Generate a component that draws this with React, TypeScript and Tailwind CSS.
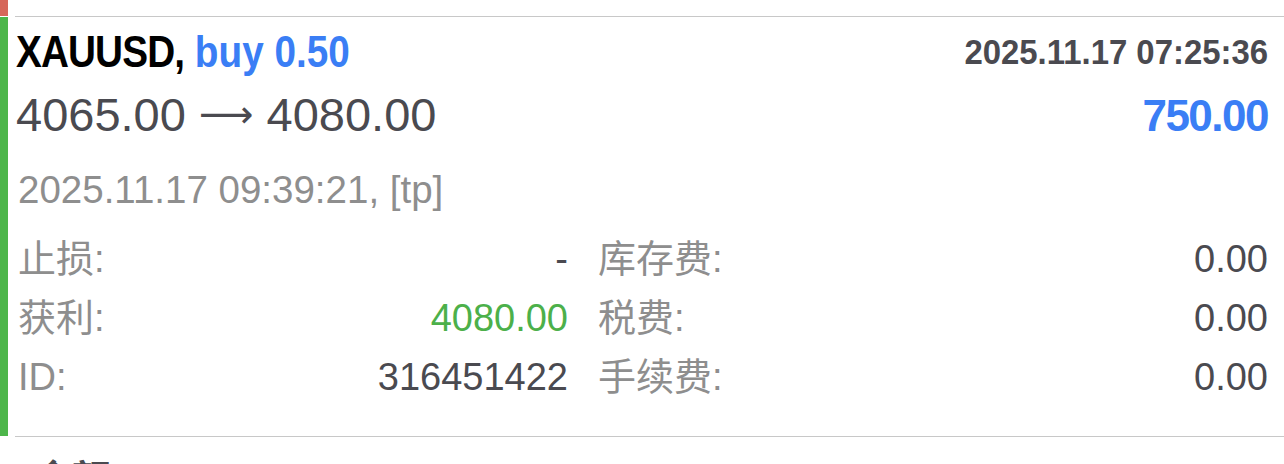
const details = [
  { label: '止损:', value: '-', tone: 'text-[#4a4a50]', rightLabel: '库存费:', rightValue: '0.00' },
  { label: '获利:', value: '4080.00', tone: 'text-[#4cb04a]', rightLabel: '税费:', rightValue: '0.00' },
  { label: 'ID:', value: '316451422', tone: 'text-[#4a4a50]', rightLabel: '手续费:', rightValue: '0.00' }
]

function Divider() {
  return (
    <div className="flex h-px">
      <div className="w-[15px] bg-white" />
      <div className="flex-1 bg-[#c8c8c8]" />
    </div>
  )
}

export default function App() {
  return (
    <div
      className="h-[464px] w-[1284px] overflow-hidden bg-white"
      style={{ fontFamily: '"Liberation Sans", "Noto Sans CJK SC", sans-serif' }}
    >
      {/* previous deal, only its bottom edge shows */}
      <div className="flex h-4">
        <div className="w-2 bg-[#d6675a]" />
      </div>
      <Divider />

      <div className="flex h-[419px]">
        <div className="w-2 bg-[#4db64a]" />
        <div className="flex-1 pl-2 pr-4">
          <div className="flex h-[70px] items-center justify-between leading-[70px]">
            <p className="inline-block origin-left scale-x-[0.88] whitespace-nowrap text-[44px] font-bold text-black">
              <span className="tracking-[-1px]">XAUUSD,</span> <span className="text-[#3a7ef5]">buy 0.50</span>
            </p>
            <p className="inline-block origin-right scale-x-[0.94] whitespace-nowrap text-[35px] font-bold text-[#4a4a50]">
              2025.11.17 07:25:36
            </p>
          </div>
          <div className="flex h-[58px] items-center justify-between leading-[58px]">
            <p className="whitespace-nowrap text-[47px] text-[#4a4a50]">
              4065.00{' '}
              <span className="relative -top-[4px] text-[38px]" style={{ fontFamily: '"DejaVu Sans", sans-serif' }}>
                ⟶
              </span>{' '}
              4080.00
            </p>
            <p className="text-[44px] font-bold tracking-[-1.5px] text-[#3a7ef5]">750.00</p>
          </div>
          <p className="mt-[15px] pl-0.5 text-[38.5px] leading-[60px] text-[#8e8e8e]">2025.11.17 09:39:21, [tp]</p>
          <div className="mt-[10px] grid grid-cols-[552px_1fr] gap-x-[30px] text-[38px] leading-[59px]">
            {details.map((row) => (
              <div key={row.label} className="contents">
                <div className="flex justify-between pl-0.5">
                  <span className="text-[#8e8e8e]">{row.label}</span>
                  <span className={row.tone}>{row.value}</span>
                </div>
                <div className="flex justify-between">
                  <span className="text-[#8e8e8e]">{row.rightLabel}</span>
                  <span className="text-[#4a4a50]">{row.rightValue}</span>
                </div>
              </div>
            ))}
          </div>
        </div>
      </div>
      <Divider />

      <div className="pl-[34px] pt-[12px] text-[38px] font-bold leading-[60px] text-[#4a4a50]">余额</div>
    </div>
  )
}
